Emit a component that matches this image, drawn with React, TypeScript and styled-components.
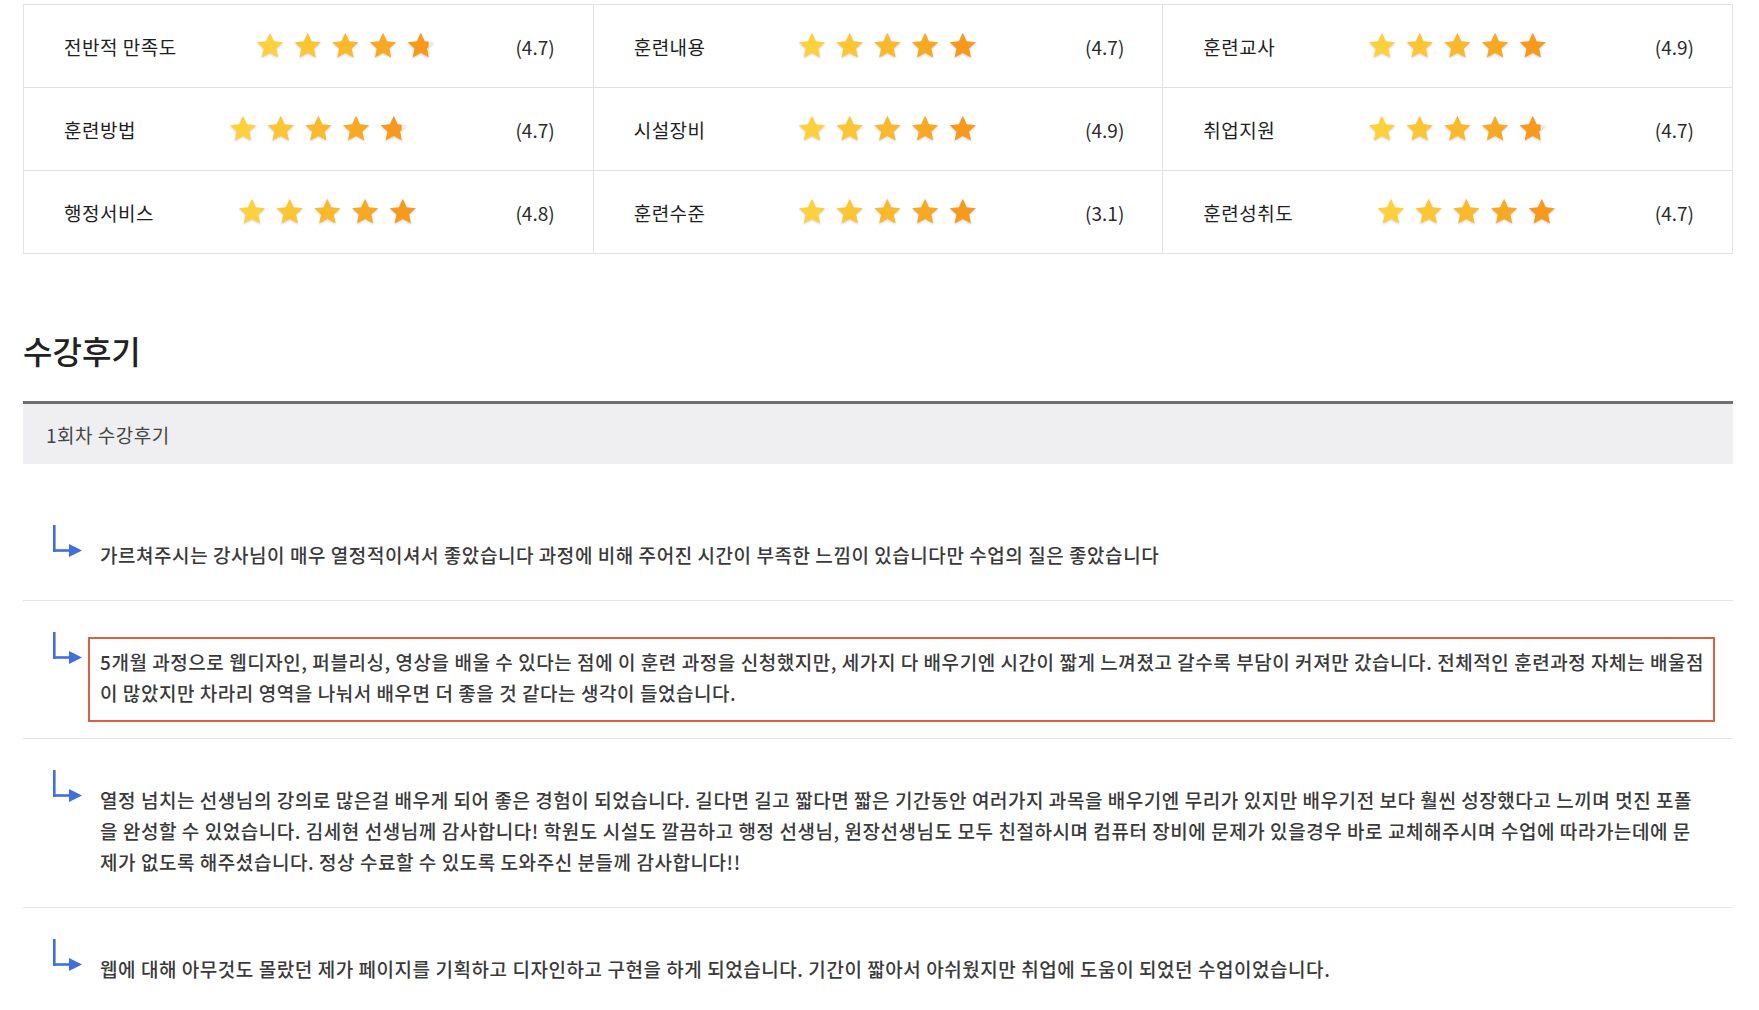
import React from "react";
import styled, { createGlobalStyle } from "styled-components";

const GlobalStyle = createGlobalStyle`
  body {
    margin: 0;
    background: #fff;
    font-family: "Noto Sans CJK KR", "Noto Sans", sans-serif;
    color: #222;
  }
`;

const Page = styled.div`
  padding: 4px 26px 0 23px;
`;

const RatingTable = styled.div`
  display: grid;
  grid-template-columns: repeat(3, 1fr);
  grid-auto-rows: 82px;
  gap: 1px;
  background: #e2e2e2;
  border: 1px solid #e2e2e2;
`;

const Cell = styled.div`
  display: flex;
  align-items: center;
  background: #fff;
  padding: 0 38px 0 40px;
`;

const Label = styled.span`
  font-size: 19px;
  letter-spacing: 0.5px;
  color: #1e1e1e;
  white-space: nowrap;
`;

const StarBox = styled.div<{ $shift?: number }>`
  flex: 1;
  display: flex;
  justify-content: center;
  padding-right: ${({ $shift = 0 }) => 14 - $shift}px;
`;

const Score = styled.span`
  font-size: 19px;
  color: #2a2a2a;
`;

const StarSvg = styled.svg`
  display: block;
  filter: drop-shadow(0 1px 1px rgba(0, 0, 0, 0.18));
`;

const Title = styled.h2`
  margin: 75px 0 30px;
  font-size: 32px;
  line-height: 42px;
  font-weight: 500;
  color: #222;
`;

const RoundBar = styled.div`
  display: flex;
  align-items: center;
  height: 60px;
  padding: 0 23px;
  border-top: 3px solid #707070;
  background: #efeff1;
  font-size: 19px;
  letter-spacing: 0.5px;
  color: #444;
`;

const ReviewList = styled.ul`
  list-style: none;
  margin: 0;
  padding: 30px 0 0;
`;

const ReviewItem = styled.li`
  display: flex;
  align-items: flex-start;
  gap: 17px;
  padding: 31px 30px 30px;
  border-bottom: 1px solid #e4e4e4;

  &:last-child {
    border-bottom: none;
  }
`;

const ReviewText = styled.p<{ $highlight?: boolean }>`
  flex-shrink: 0;
  margin: 14px 0 0;
  width: 1604px;
  font-size: 19px;
  letter-spacing: 0.55px;
  line-height: 31px;
  font-weight: 500;
  color: #3a3a3a;
  ${({ $highlight }) =>
    $highlight &&
    `
    width: 1610px;
    border: 2px solid #de5f3f;
    padding: 7px 3px 12px 10px;
    margin: 5px -5px -14px -12px;
  `}
`;

type Rating = {
  label: string;
  score: string;
  partial?: number;
  shift?: number;
};

const ratings: Rating[] = [
  { label: "전반적 만족도", score: "(4.7)", partial: 0.78, shift: 20 },
  { label: "훈련내용", score: "(4.7)" },
  { label: "훈련교사", score: "(4.9)" },
  { label: "훈련방법", score: "(4.7)", partial: 0.78 },
  { label: "시설장비", score: "(4.9)" },
  { label: "취업지원", score: "(4.7)", partial: 0.78 },
  { label: "행정서비스", score: "(4.8)" },
  { label: "훈련수준", score: "(3.1)" },
  { label: "훈련성취도", score: "(4.7)" },
];

const reviews = [
  { text: "가르쳐주시는 강사님이 매우 열정적이셔서 좋았습니다 과정에 비해 주어진 시간이 부족한 느낌이 있습니다만 수업의 질은 좋았습니다" },
  {
    text: "5개월 과정으로 웹디자인, 퍼블리싱, 영상을 배울 수 있다는 점에 이 훈련 과정을 신청했지만, 세가지 다 배우기엔 시간이 짧게 느껴졌고 갈수록 부담이 커져만 갔습니다. 전체적인 훈련과정 자체는 배울점이 많았지만 차라리 영역을 나눠서 배우면 더 좋을 것 같다는 생각이 들었습니다.",
    highlight: true,
  },
  {
    text: "열정 넘치는 선생님의 강의로 많은걸 배우게 되어 좋은 경험이 되었습니다. 길다면 길고 짧다면 짧은 기간동안 여러가지 과목을 배우기엔 무리가 있지만 배우기전 보다 훨씬 성장했다고 느끼며 멋진 포폴을 완성할 수 있었습니다. 김세현 선생님께 감사합니다! 학원도 시설도 깔끔하고 행정 선생님, 원장선생님도 모두 친절하시며 컴퓨터 장비에 문제가 있을경우 바로 교체해주시며 수업에 따라가는데에 문제가 없도록 해주셨습니다. 정상 수료할 수 있도록 도와주신 분들께 감사합니다!!",
  },
  { text: "웹에 대해 아무것도 몰랐던 제가 페이지를 기획하고 디자인하고 구현을 하게 되었습니다. 기간이 짧아서 아쉬웠지만 취업에 도움이 되었던 수업이었습니다." },
];

// five-point star in a 28x28 box
const STAR = "M14 0.8l3.9 8.4 9.2 1-6.8 6.3 1.9 9.1L14 21l-8.2 4.6 1.9-9.1L0.9 10.2l9.2-1z";
const starColors = ["#fdd13b", "#fcc533", "#fab82b", "#f8a924", "#f7991d"];

const Stars = ({ partial }: { partial?: number }) => {
  const pitch = 37.7;
  return (
    <StarSvg width={180} height={28} viewBox="0 0 180 28">
      {starColors.map((c, i) => {
        const cut = i === 4 && partial;
        return (
          <g key={i} transform={`translate(${i * pitch} 0)`}>
            {cut ? (
              <>
                <path d={STAR} fill="#ededed" />
                <svg x={0} y={0} width={28 * partial} height={28} viewBox={`0 0 ${28 * partial} 28`}>
                  <path d={STAR} fill={c} />
                </svg>
              </>
            ) : (
              <path d={STAR} fill={c} />
            )}
          </g>
        );
      })}
    </StarSvg>
  );
};

const ArrowIcon = () => (
  <svg width={30} height={34} viewBox="0 0 30 34" style={{ flexShrink: 0 }}>
    <rect x={0} y={0} width={2.6} height={27} fill="#3f6fdf" />
    <rect x={0} y={24.2} width={18} height={2.6} fill="#3f6fdf" />
    <polygon points="16,19 29,25.5 16,32" fill="#3f6fdf" />
  </svg>
);

export default function App() {
  return (
    <>
      <GlobalStyle />
      <Page>
        <RatingTable>
          {ratings.map((r) => (
            <Cell key={r.label}>
              <Label>{r.label}</Label>
              <StarBox $shift={r.shift}>
                <Stars partial={r.partial} />
              </StarBox>
              <Score>{r.score}</Score>
            </Cell>
          ))}
        </RatingTable>

        <Title>수강후기</Title>
        <RoundBar>1회차 수강후기</RoundBar>

        <ReviewList>
          {reviews.map((r, i) => (
            <ReviewItem key={i}>
              <ArrowIcon />
              <ReviewText $highlight={r.highlight}>{r.text}</ReviewText>
            </ReviewItem>
          ))}
        </ReviewList>
      </Page>
    </>
  );
}
